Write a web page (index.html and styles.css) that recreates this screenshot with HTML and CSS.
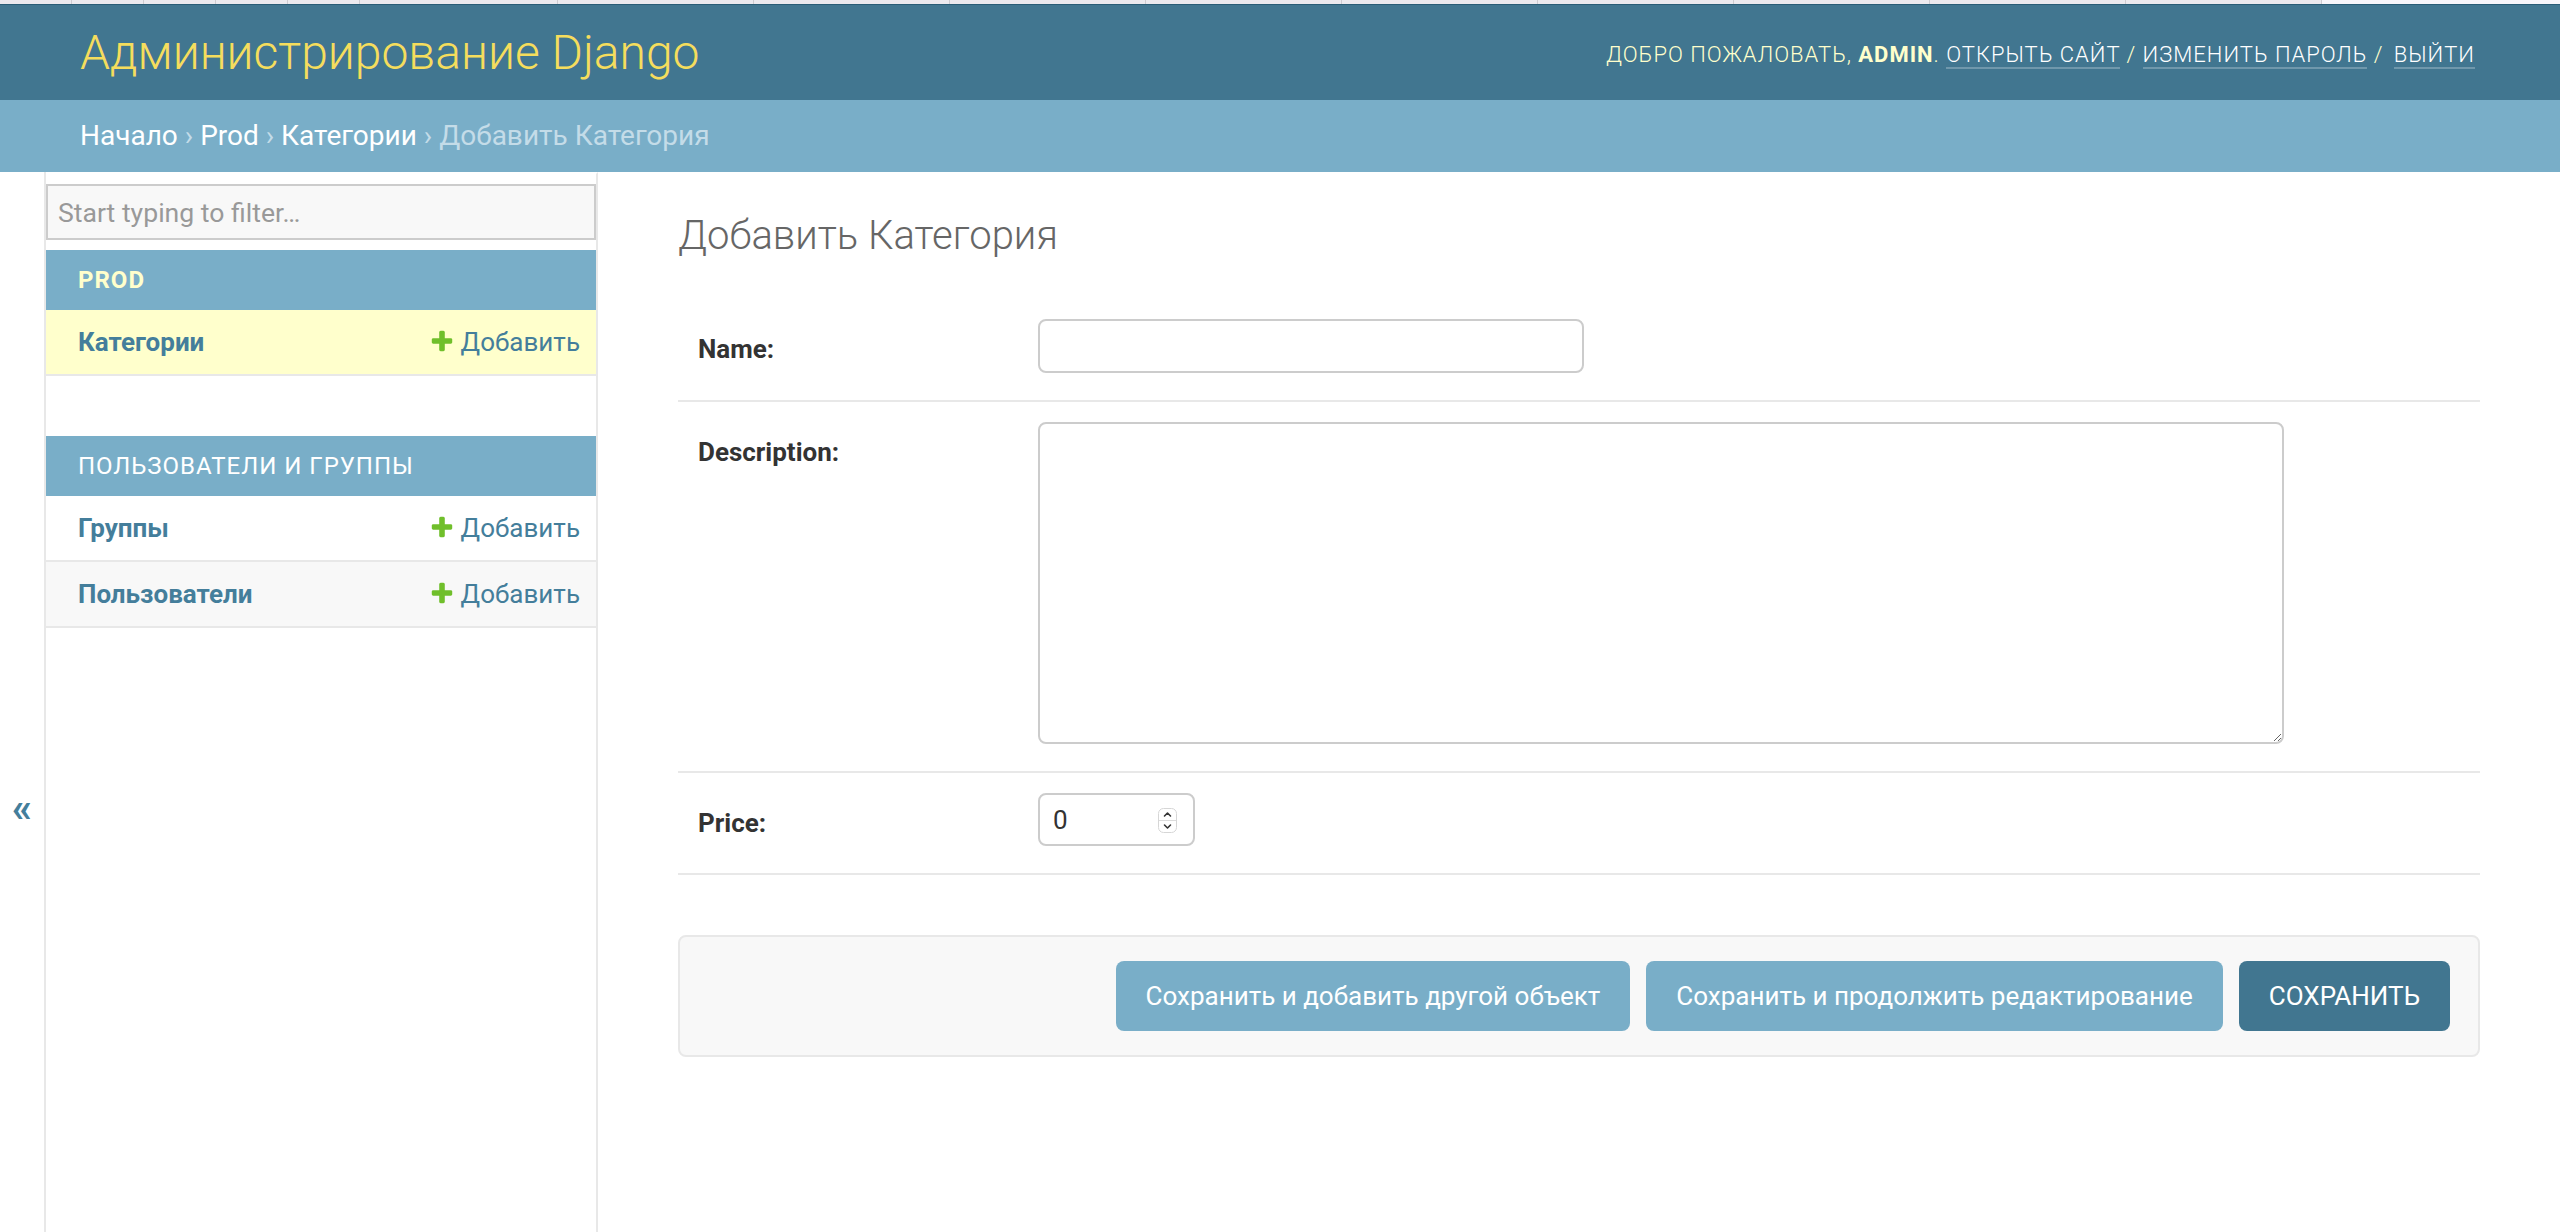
FILE: index.html
```
<!DOCTYPE html>
<html lang="ru">
<head>
<meta charset="utf-8">
<title>Добавить Категория | Администрирование Django</title>
<link rel="stylesheet" href="styles.css">
</head>
<body>
<div class="tabstrip">
  <span class="tab tab-s"></span><span class="tab tab-s"></span><span class="tab tab-s"></span><span class="tab tab-s"></span><span class="tab tab-s"></span>
  <span class="tab tab-first"></span><span class="tab tab-l"></span><span class="tab tab-l"></span><span class="tab tab-l"></span><span class="tab tab-l"></span><span class="tab tab-l"></span><span class="tab tab-l"></span><span class="tab tab-l"></span><span class="tab tab-l"></span><span class="tab tab-l"></span>
  <span class="tab tab-rest"></span>
</div>
<header class="header">
  <h1 class="branding-title">Администрирование Django</h1>
  <div class="user-tools">Добро пожаловать, <strong>admin</strong>. <a href="#">Открыть сайт</a> / <a href="#">Изменить пароль</a> / <a href="#" class="logout">Выйти</a></div>
</header>
<nav class="breadcrumbs"><a href="#">Начало</a> › <a href="#">Prod</a> › <a href="#">Категории</a> › Добавить Категория</nav>
<div class="main">
  <button class="toggle" type="button">«</button>
  <nav class="sidebar">
    <input class="nav-filter" type="search" placeholder="Start typing to filter…">
    <div class="app">
      <div class="app-caption"><a href="#">Prod</a></div>
      <div class="model-row current-model">
        <a href="#" class="model-link">Категории</a>
        <a href="#" class="addlink"><svg class="plus" viewBox="0 0 1792 1792"><path fill="#70bf2b" d="M1600 796v192q0 40-28 68t-68 28h-416v416q0 40-28 68t-68 28h-192q-40 0-68-28t-28-68v-416h-416q-40 0-68-28t-28-68v-192q0-40 28-68t68-28h416v-416q0-40 28-68t68-28h192q40 0 68 28t28 68v416h416q40 0 68 28t28 68z"/></svg>Добавить</a>
      </div>
    </div>
    <div class="app">
      <div class="app-caption plain">Пользователи и группы</div>
      <div class="model-row">
        <a href="#" class="model-link">Группы</a>
        <a href="#" class="addlink"><svg class="plus" viewBox="0 0 1792 1792"><path fill="#70bf2b" d="M1600 796v192q0 40-28 68t-68 28h-416v416q0 40-28 68t-68 28h-192q-40 0-68-28t-28-68v-416h-416q-40 0-68-28t-28-68v-192q0-40 28-68t68-28h416v-416q0-40 28-68t68-28h192q40 0 68 28t28 68v416h416q40 0 68 28t28 68z"/></svg>Добавить</a>
      </div>
      <div class="model-row striped">
        <a href="#" class="model-link">Пользователи</a>
        <a href="#" class="addlink"><svg class="plus" viewBox="0 0 1792 1792"><path fill="#70bf2b" d="M1600 796v192q0 40-28 68t-68 28h-416v416q0 40-28 68t-68 28h-192q-40 0-68-28t-28-68v-416h-416q-40 0-68-28t-28-68v-192q0-40 28-68t68-28h416v-416q0-40 28-68t68-28h192q40 0 68 28t28 68v416h416q40 0 68 28t28 68z"/></svg>Добавить</a>
      </div>
    </div>
  </nav>
  <main class="content">
    <h1 class="page-title">Добавить Категория</h1>
    <form class="form">
      <fieldset class="fieldset">
        <div class="form-row">
          <label class="field-label" for="id_name">Name:</label>
          <input class="text-input name-input" id="id_name" type="text">
        </div>
        <div class="form-row">
          <label class="field-label" for="id_description">Description:</label>
          <textarea class="text-input desc-input" id="id_description"></textarea>
        </div>
        <div class="form-row">
          <label class="field-label" for="id_price">Price:</label>
          <span class="num-wrap">
            <input class="text-input price-input" id="id_price" type="text" value="0">
            <svg class="spinner" viewBox="0 0 19 25" width="19" height="25">
              <rect x="0.5" y="0.5" width="18" height="24" rx="5" fill="#fff" stroke="#d6d6d6"/>
              <line x1="1" y1="12.5" x2="18" y2="12.5" stroke="#dcdcdc" stroke-width="1"/>
              <polyline points="6.5,8 9.5,5 12.5,8" fill="none" stroke="#333" stroke-width="1.6" stroke-linecap="round" stroke-linejoin="round"/>
              <polyline points="6.5,17 9.5,20 12.5,17" fill="none" stroke="#333" stroke-width="1.6" stroke-linecap="round" stroke-linejoin="round"/>
            </svg>
          </span>
        </div>
      </fieldset>
      <div class="submit-row">
        <button class="btn" type="button">Сохранить и добавить другой объект</button>
        <button class="btn" type="button">Сохранить и продолжить редактирование</button>
        <button class="btn btn-default" type="button">Сохранить</button>
      </div>
    </form>
  </main>
</div>
</body>
</html>
```
FILE: styles.css
```
html, body {
  margin: 0;
  height: 100%;
}
body {
  font-family: Roboto, "Liberation Sans", sans-serif;
  font-size: 28px;
  color: #333;
  background: #fff;
  overflow: hidden;
  display: flex;
  flex-direction: column;
}

/* browser tab strip peeking at the top */
.tabstrip {
  display: flex;
  flex: none;
  height: 4px;
  background: #ebe9ee;
}
.tab {
  flex: none;
  box-sizing: border-box;
  border-right: 1px solid #cdcbd0;
}
.tab-s { width: 72px; }
.tab-first { width: 198px; }
.tab-l { width: 196px; }
.tab-rest {
  flex: 1;
  border-right: 0;
  background: #f7f5fa;
}

/* header */
.header {
  flex: none;
  display: flex;
  justify-content: space-between;
  align-items: center;
  height: 96px;
  box-sizing: border-box;
  padding: 0 80px;
  background: #417690;
  border-top: 1px solid #2a5d77;
  color: #ffc;
}
.branding-title {
  margin: 0;
  font-size: 48px;
  line-height: 56px;
  font-weight: 300;
  color: #f5dd5d;
}
.user-tools {
  margin-right: 5px;
  font-size: 22px;
  font-weight: 300;
  letter-spacing: 1px;
  text-transform: uppercase;
  line-height: 26px;
  padding-top: 4px;
}
.user-tools strong {
  font-weight: 700;
}
.user-tools a {
  color: #fff;
  text-decoration: none;
  border-bottom: 2px solid rgba(255, 255, 255, 0.25);
}
.user-tools .logout {
  margin-left: 4px;
}

/* breadcrumbs */
.breadcrumbs {
  flex: none;
  background: #79aec8;
  padding: 20px 80px;
  color: #c4dce8;
  font-size: 28px;
  line-height: 32px;
}
.breadcrumbs a {
  color: #fff;
  text-decoration: none;
}

/* main area */
.main {
  flex: 1;
  display: flex;
  min-height: 0;
}
.toggle {
  flex: 0 0 46px;
  display: flex;
  align-items: center;
  justify-content: center;
  padding: 214px 0 0;
  margin: 0;
  border: 0;
  border-right: 2px solid #e8e8e8;
  background: #fff;
  font-family: Roboto, "Liberation Sans", sans-serif;
  font-size: 40px;
  font-weight: 700;
  line-height: 46px;
  color: #447e9b;
}
.sidebar {
  flex: 0 0 550px;
  border-top: 2px solid transparent;
  border-right: 2px solid #e8e8e8;
}
.nav-filter {
  display: block;
  width: 100%;
  height: 56px;
  box-sizing: border-box;
  margin: 10px 0;
  padding: 4px 10px;
  border: 2px solid #ccc;
  border-radius: 0;
  background: #f8f8f8;
  font-family: Roboto, "Liberation Sans", sans-serif;
  font-size: 26.6px;
  color: #333;
  outline: none;
}
.nav-filter::placeholder {
  color: #999;
}
.app {
  margin-bottom: 60px;
}
.app-caption {
  padding: 16px 32px;
  background: #79aec8;
  color: #fff;
  font-size: 24px;
  line-height: 28px;
  letter-spacing: 1px;
  text-transform: uppercase;
}
.app-caption a {
  color: #ffc;
  font-weight: 700;
  text-decoration: none;
}
.model-row {
  display: flex;
  justify-content: space-between;
  align-items: flex-start;
  padding: 16px 16px 16px 32px;
  border-bottom: 2px solid #e8e8e8;
  font-size: 26px;
  line-height: 32px;
}
.current-model {
  background: #ffc;
}
.striped {
  background: #f8f8f8;
}
.model-link {
  color: #447e9b;
  font-weight: 700;
  text-decoration: none;
}
.addlink {
  display: inline-flex;
  align-items: flex-start;
  color: #447e9b;
  text-decoration: none;
}
.plus {
  flex: none;
  width: 26px;
  height: 26px;
  margin: 2px 6px 0 0;
}

/* content */
.content {
  flex: 1;
  min-width: 0;
  padding: 40px 80px;
}
.page-title {
  margin: 0 0 40px;
  font-size: 40px;
  line-height: 47px;
  font-weight: 300;
  color: #666;
}
.fieldset {
  margin: 0;
  padding: 0;
  border: 0;
  min-width: 0;
}
.form-row {
  display: flex;
  align-items: flex-start;
  padding: 20px 20px 27px;
  border-bottom: 2px solid #e8e8e8;
}
.field-label {
  flex: 0 0 340px;
  box-sizing: border-box;
  padding: 15px 20px 0 0;
  font-size: 26px;
  line-height: 30px;
  font-weight: 700;
  color: #333;
}
.text-input {
  display: block;
  box-sizing: border-box;
  margin: 0;
  padding: 10px 12px;
  border: 2px solid #ccc;
  border-radius: 8px;
  background: #fff;
  font-family: Roboto, "Liberation Sans", sans-serif;
  font-size: 26px;
  color: #333;
  outline: none;
}
.name-input {
  width: 546px;
  height: 54px;
}
.desc-input {
  width: 1246px;
  height: 322px;
  resize: both;
}
.num-wrap {
  position: relative;
  display: block;
}
.price-input {
  width: 157px;
  height: 53px;
  padding-left: 13px;
}
.spinner {
  position: absolute;
  right: 18px;
  top: 15px;
}

/* submit row */
.submit-row {
  display: flex;
  justify-content: flex-end;
  gap: 16px;
  margin-top: 60px;
  padding: 24px 28px;
  background: #f8f8f8;
  border: 2px solid #e8e8e8;
  border-radius: 8px;
}
.btn {
  height: 70px;
  padding: 0 30px;
  border: 0;
  border-radius: 8px;
  background: #79aec8;
  color: #fff;
  font-family: Roboto, "Liberation Sans", sans-serif;
  font-size: 26px;
  line-height: 30px;
  cursor: pointer;
}
.btn-default {
  background: #417690;
  text-transform: uppercase;
}
```
